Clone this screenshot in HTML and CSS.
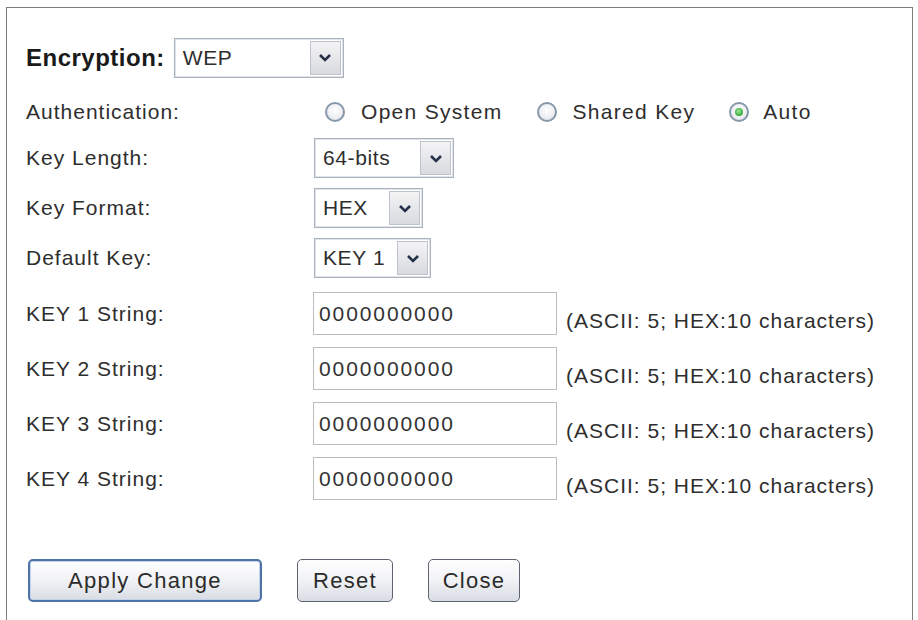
FILE: index.html
```html
<!DOCTYPE html>
<html lang="en">
<head>
  <meta charset="UTF-8">
  <title>Wireless Security Setup</title>
  <link rel="stylesheet" href="styles.css">
</head>
<body>
  <div class="frame">
    <div class="row enc-row">
      <span class="enc-label">Encryption:</span>
      <div class="select w-enc">
        <span class="select-text">WEP</span>
        <span class="select-btn"><svg width="14" height="9" viewBox="0 0 14 9"><path d="M2 2 L7 7 L12 2" fill="none" stroke="#26324a" stroke-width="2.6"/></svg></span>
      </div>
    </div>

    <div class="row auth-row">
      <span class="label">Authentication:</span>
      <div class="radios">
        <span class="radio"></span><span class="radio-text">Open System</span>
        <span class="radio"></span><span class="radio-text">Shared Key</span>
        <span class="radio checked"></span><span class="radio-text">Auto</span>
      </div>
    </div>

    <div class="row sel-row first-sel">
      <span class="label">Key Length:</span>
      <div class="select w-len">
        <span class="select-text">64-bits</span>
        <span class="select-btn"><svg width="14" height="9" viewBox="0 0 14 9"><path d="M2 2 L7 7 L12 2" fill="none" stroke="#26324a" stroke-width="2.6"/></svg></span>
      </div>
    </div>

    <div class="row sel-row">
      <span class="label">Key Format:</span>
      <div class="select w-fmt">
        <span class="select-text">HEX</span>
        <span class="select-btn"><svg width="14" height="9" viewBox="0 0 14 9"><path d="M2 2 L7 7 L12 2" fill="none" stroke="#26324a" stroke-width="2.6"/></svg></span>
      </div>
    </div>

    <div class="row sel-row">
      <span class="label">Default Key:</span>
      <div class="select w-def">
        <span class="select-text">KEY 1</span>
        <span class="select-btn"><svg width="14" height="9" viewBox="0 0 14 9"><path d="M2 2 L7 7 L12 2" fill="none" stroke="#26324a" stroke-width="2.6"/></svg></span>
      </div>
    </div>

    <div class="row key-row first-key">
      <span class="label">KEY 1 String:</span>
      <div class="key-input">0000000000</div>
      <span class="hint">(ASCII: 5; HEX:10 characters)</span>
    </div>
    <div class="row key-row">
      <span class="label">KEY 2 String:</span>
      <div class="key-input">0000000000</div>
      <span class="hint">(ASCII: 5; HEX:10 characters)</span>
    </div>
    <div class="row key-row">
      <span class="label">KEY 3 String:</span>
      <div class="key-input">0000000000</div>
      <span class="hint">(ASCII: 5; HEX:10 characters)</span>
    </div>
    <div class="row key-row">
      <span class="label">KEY 4 String:</span>
      <div class="key-input">0000000000</div>
      <span class="hint">(ASCII: 5; HEX:10 characters)</span>
    </div>

    <div class="buttons">
      <button class="btn btn-apply">Apply Change</button>
      <button class="btn btn-reset">Reset</button>
      <button class="btn btn-close">Close</button>
    </div>
  </div>
</body>
</html>
```

FILE: styles.css
```css
html, body {
  margin: 0;
  padding: 0;
  background: #ffffff;
}
body {
  font-family: "Liberation Sans", Arial, sans-serif;
  font-size: 21px;
  letter-spacing: 1px;
  color: #2e2e2e;
  overflow: hidden;
}
.frame {
  margin: 7px 0 0 6px;
  width: 907px;
  height: 640px;
  border: 1px solid #7c7c7c;
  border-bottom: none;
  padding-left: 19px;
  box-sizing: border-box;
  padding-top: 29px;
}
.row {
  display: flex;
  align-items: center;
}
.label {
  width: 288px;
  flex: none;
}
.label-wide {
  letter-spacing: 1.6px;
}
.enc-row {
  height: 41px;
}
.enc-label {
  font-weight: bold;
  font-size: 24px;
  letter-spacing: 0.5px;
  color: #1a1a1a;
  margin-right: 9px;
}
.auth-row {
  height: 40px;
  margin-top: 14px;
}
.radios {
  display: flex;
  align-items: center;
  padding-left: 11px;
}
.radio {
  width: 20px;
  height: 20px;
  box-sizing: border-box;
  border: 2px solid #8798ab;
  border-radius: 50%;
  background: radial-gradient(circle at 50% 40%, #ffffff 0%, #eef0f3 55%, #d3d8df 100%);
  display: flex;
  align-items: center;
  justify-content: center;
  flex: none;
}
.radio.checked::after {
  content: "";
  width: 8px;
  height: 8px;
  border-radius: 50%;
  background: radial-gradient(circle at 45% 40%, #9be89b 0%, #3aae3a 65%, #237f23 100%);
}
.radio-text {
  margin-left: 16px;
  margin-right: 34px;
  letter-spacing: 1.3px;
}
.radio-text:last-child {
  margin-left: 14px;
  margin-right: 0;
}
.sel-row {
  height: 40px;
  margin-top: 10px;
}
.first-sel {
  margin-top: 6px;
}
.select {
  height: 40px;
  box-sizing: border-box;
  border: 1px solid #a9b2bd;
  box-shadow: inset 0 0 0 1px #dfe4ea;
  background: #ffffff;
  display: flex;
  align-items: center;
  padding: 2px;
}
.select-text {
  flex: 1;
  padding-left: 6px;
  letter-spacing: 0.6px;
}
.select-btn {
  width: 31px;
  height: 34px;
  box-sizing: border-box;
  border: 1px solid #bcc3cc;
  background: linear-gradient(#f4f4f5, #d8dadf);
  display: flex;
  align-items: center;
  justify-content: center;
  flex: none;
}
.w-enc { width: 170px; }
.w-len { width: 140px; }
.w-fmt { width: 109px; }
.w-def { width: 117px; }
.key-row {
  height: 43px;
  margin-top: 12px;
}
.first-key {
  margin-top: 14px;
}
.key-input {
  width: 244px;
  height: 43px;
  box-sizing: border-box;
  border: 1px solid #bdbdbd;
  margin-left: -1px;
  padding-left: 5px;
  display: flex;
  align-items: center;
  letter-spacing: 1.9px;
  color: #333333;
}
.hint {
  margin-left: 9px;
  padding-top: 14px;
}
.buttons {
  display: flex;
  align-items: center;
  margin-top: 59px;
  padding-left: 2px;
}
.btn {
  font-family: "Liberation Sans", Arial, sans-serif;
  font-size: 22px;
  letter-spacing: 1.3px;
  color: #2b2b2b;
  height: 43px;
  box-sizing: border-box;
  background: linear-gradient(#ffffff 0%, #f1f2f5 50%, #d8dce3 100%);
  border: 1px solid #5d6470;
  border-radius: 5px;
  padding: 0;
  margin-right: 35px;
}
.btn-apply {
  width: 234px;
  border: 2px solid #4f72a8;
  box-shadow: inset 0 0 0 1px #c4d3ea;
}
.btn-reset { width: 96px; }
.btn-close { width: 92px; }
```
